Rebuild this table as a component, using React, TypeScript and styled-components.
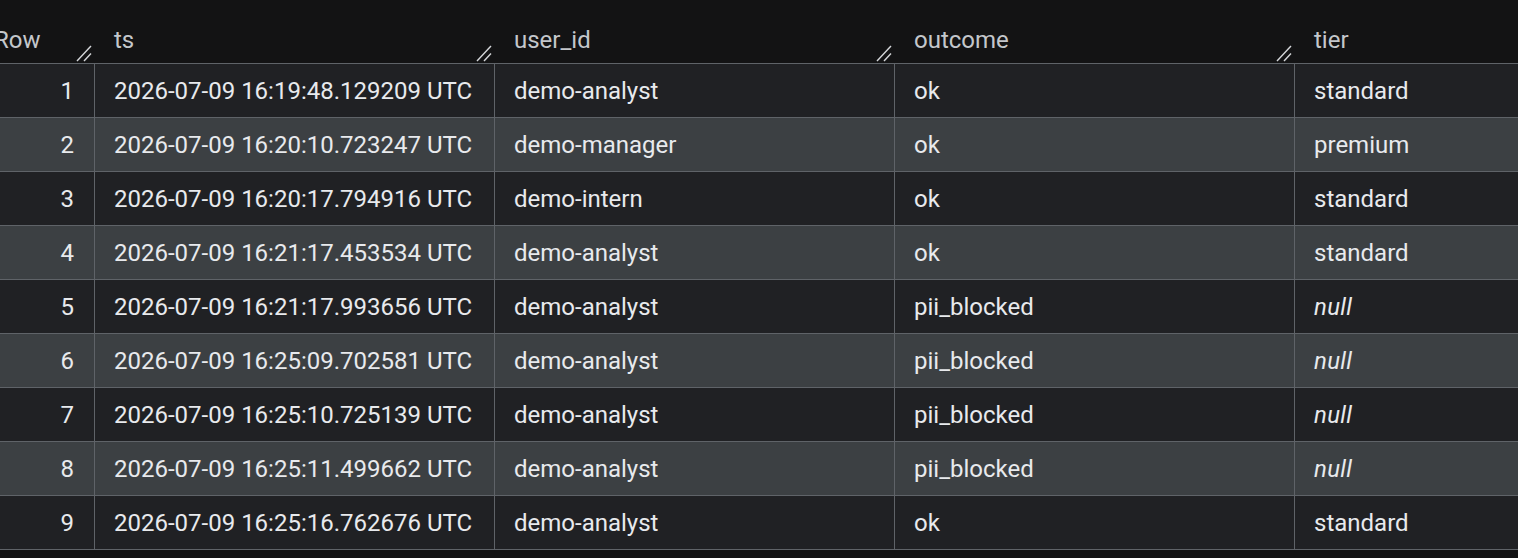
import React from "react";
import styled, { createGlobalStyle } from "styled-components";

const Global = createGlobalStyle`
  html, body { margin: 0; padding: 0; background: #131314; overflow: hidden; }
  body { font-family: Roboto, "Noto Sans", Arial, sans-serif; }
`;

const Viewport = styled.div`
  width: 1518px;
  height: 558px;
  overflow: hidden;
  background: #131314;
`;

const Table = styled.div`
  display: grid;
  grid-template-columns: 120px 400px 400px 400px 400px;
  width: max-content;
  margin-left: -25px;
  font-size: 24px;
  letter-spacing: 0;
`;

const HeadCell = styled.div`
  height: 64px;
  box-sizing: border-box;
  border-bottom: 1px solid #5f6368;
  display: flex;
  align-items: flex-end;
  justify-content: space-between;
  padding: 0 3px 1px 19px;
  color: #c4c7cb;
`;

const HeadLabel = styled.span`
  line-height: 28px;
  margin-bottom: 8px;
`;

const Cell = styled.div<{ $alt: boolean; $align?: "left" | "right" }>`
  height: 54px;
  box-sizing: border-box;
  border-bottom: 1px solid #5f6368;
  border-right: 1px solid #5f6368;
  background: ${(p) => (p.$alt ? "#3c4043" : "#202124")};
  color: #e8eaed;
  display: flex;
  align-items: center;
  justify-content: ${(p) => (p.$align === "right" ? "flex-end" : "flex-start")};
  padding: ${(p) => (p.$align === "right" ? "0 20px 0 0" : "0 0 0 19px")};
  white-space: nowrap;
`;

const Null = styled.span`
  font-style: italic;
  letter-spacing: 0.3px;
`;

const Handle = () => (
  <svg width="16" height="17" viewBox="0 0 16 17" style={{ flex: "none" }}>
    <line x1="1" y1="16" x2="15" y2="1" stroke="#d6d8db" strokeWidth="1.4" />
    <line x1="8" y1="16" x2="15" y2="8.5" stroke="#d6d8db" strokeWidth="1.4" />
  </svg>
);

const rows: [string, string, string, string | null][] = [
  ["2026-07-09 16:19:48.129209 UTC", "demo-analyst", "ok", "standard"],
  ["2026-07-09 16:20:10.723247 UTC", "demo-manager", "ok", "premium"],
  ["2026-07-09 16:20:17.794916 UTC", "demo-intern", "ok", "standard"],
  ["2026-07-09 16:21:17.453534 UTC", "demo-analyst", "ok", "standard"],
  ["2026-07-09 16:21:17.993656 UTC", "demo-analyst", "pii_blocked", null],
  ["2026-07-09 16:25:09.702581 UTC", "demo-analyst", "pii_blocked", null],
  ["2026-07-09 16:25:10.725139 UTC", "demo-analyst", "pii_blocked", null],
  ["2026-07-09 16:25:11.499662 UTC", "demo-analyst", "pii_blocked", null],
  ["2026-07-09 16:25:16.762676 UTC", "demo-analyst", "ok", "standard"],
];

const headers = ["Row", "ts", "user_id", "outcome", "tier"];

export default function App() {
  return (
    <Viewport>
      <Global />
      <Table>
        {headers.map((h, i) => (
          <HeadCell key={h}>
            <HeadLabel>{h}</HeadLabel>
            {i < headers.length - 1 && <Handle />}
          </HeadCell>
        ))}
        {rows.map((r, i) => {
          const alt = i % 2 === 1;
          return (
            <React.Fragment key={i}>
              <Cell $alt={alt} $align="right">{i + 1}</Cell>
              <Cell $alt={alt}>{r[0]}</Cell>
              <Cell $alt={alt}>{r[1]}</Cell>
              <Cell $alt={alt}>{r[2]}</Cell>
              <Cell $alt={alt}>{r[3] === null ? <Null>null</Null> : r[3]}</Cell>
            </React.Fragment>
          );
        })}
      </Table>
    </Viewport>
  );
}
